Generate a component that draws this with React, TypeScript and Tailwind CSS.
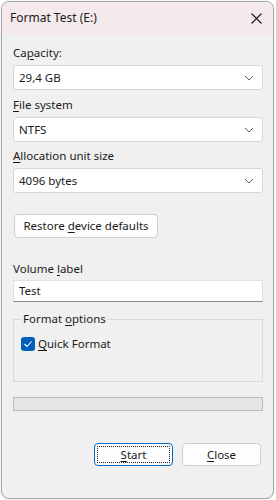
import React from "react";

const font = { fontFamily: '"Noto Sans", "Open Sans", sans-serif' };

const Chevron = () => (
  <svg width="10" height="6" viewBox="0 0 10 6" className="shrink-0">
    <path d="M1 1 L5 5 L9 1" fill="none" stroke="#5f5f5f" strokeWidth="1" />
  </svg>
);

const Combo = ({ value }: { value: string }) => (
  <div className="flex h-[25px] w-[250px] items-center justify-between rounded-[3px] border border-[#d6d6d6] bg-white pl-[5px] pr-[8px]">
    <span>{value}</span>
    <Chevron />
  </div>
);

const Label = ({ pre, u, post }: { pre: string; u: string; post: string }) => (
  <div className="h-[16px] leading-[16px]">
    {pre}
    <span className="underline underline-offset-2">{u}</span>
    {post}
  </div>
);

export default function App() {
  return (
    <div className="h-[500px] w-[276px] bg-white pl-[1px] pt-[1px] text-[11.5px] text-[#1b1b1b]" style={font}>
      <div className="flex h-[498px] w-[273px] flex-col overflow-hidden rounded-[8px] border border-[#a8a8a8] bg-[#f0f0f0] shadow-[0_0_2px_rgba(0,0,0,0.15)]">
        {/* title bar */}
        <div className="flex h-[32px] shrink-0 items-center justify-between bg-[#f4eaec] pl-[8px] pr-[11px]">
          <span className="text-[12px]">Format Test (E:)</span>
          <svg width="11" height="11" viewBox="0 0 11 11">
            <path d="M0.5 0.5 L10.5 10.5 M10.5 0.5 L0.5 10.5" stroke="#1b1b1b" strokeWidth="1.1" />
          </svg>
        </div>

        <div className="flex flex-col pl-[11px] pt-[11px]">
          <Label pre="Ca" u="p" post="acity:" />
          <div className="mt-[4px]">
            <Combo value="29,4 GB" />
          </div>

          <div className="mt-[7px]">
            <Label pre="" u="F" post="ile system" />
          </div>
          <div className="mt-[4px]">
            <Combo value="NTFS" />
          </div>

          <div className="mt-[6px]">
            <Label pre="" u="A" post="llocation unit size" />
          </div>
          <div className="mt-[4px]">
            <Combo value="4096 bytes" />
          </div>

          <button className="ml-[1px] mt-[21px] flex h-[24px] w-[144px] items-center justify-center rounded-[4px] border border-[#d0d0d0] bg-[#fdfdfd]">
            Restore <span className="underline underline-offset-2 ml-[3px]">d</span>evice defaults
          </button>

          <div className="mt-[23px]">
            <Label pre="Volume " u="l" post="abel" />
          </div>
          <div className="mt-[3px] flex h-[22px] w-[250px] items-center border border-[#e2e2e2] border-b-[#8a8a8a] bg-white pl-[5px]">
            Test
          </div>

          <fieldset className="mt-[9px] h-[71px] w-[250px] border border-[#dadada] px-[7px]">
            <legend className="px-[2px] leading-[16px]">
              Format <span className="underline underline-offset-2">o</span>ptions
            </legend>
            <div className="mt-[8px] flex items-center">
              <div className="flex h-[14px] w-[14px] items-center justify-center rounded-[3px] bg-[#005fb8]">
                <svg width="10" height="8" viewBox="0 0 10 8">
                  <path d="M1.5 4 L4 6.5 L8.5 1.5" fill="none" stroke="white" strokeWidth="1.1" />
                </svg>
              </div>
              <span className="ml-[3px]">
                <span className="underline underline-offset-2">Q</span>uick Format
              </span>
            </div>
          </fieldset>

          <div className="mt-[15px] h-[14px] w-[250px] border border-[#bcbcbc] bg-[#e6e6e6]" />

          <div className="mt-[32px] flex w-[250px] justify-end gap-[9px] pr-[2px]">
            <button className="flex h-[23px] w-[79px] items-center justify-center rounded-[4px] border border-[#0067c0] bg-[#fdfdfd] p-[2px]">
              <span className="flex h-full w-full items-center justify-center border border-dotted border-[#202020]">
                <span>
                  <span className="underline underline-offset-2">S</span>tart
                </span>
              </span>
            </button>
            <button className="flex h-[23px] w-[79px] items-center justify-center rounded-[4px] border border-[#d0d0d0] bg-[#fdfdfd]">
              <span>
                <span className="underline underline-offset-2">C</span>lose
              </span>
            </button>
          </div>
        </div>
      </div>
    </div>
  );
}
